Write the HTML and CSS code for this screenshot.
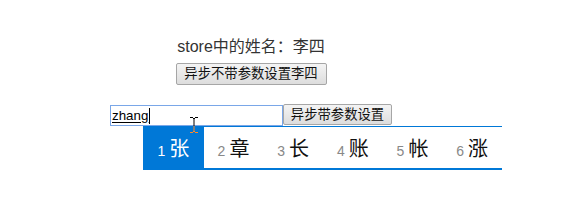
FILE: index.html
```html
<!DOCTYPE html>
<html>
<head>
<meta charset="utf-8">
<link rel="stylesheet" href="styles.css">
</head>
<body>
<div class="app">
  <div class="name">store中的姓名：李四</div>
  <div class="row1"><button class="btn">异步不带参数设置李四</button></div>
  <div class="row2">
    <div class="input"><span class="comp">zhang</span><span class="caret"></span></div><button class="btn">异步带参数设置</button>
  </div>
</div>
<div class="ime">
  <div class="cand sel"><span class="num">1</span><span class="ch">张</span></div>
  <div class="cand"><span class="num">2</span><span class="ch">章</span></div>
  <div class="cand"><span class="num">3</span><span class="ch">长</span></div>
  <div class="cand"><span class="num">4</span><span class="ch">账</span></div>
  <div class="cand"><span class="num">5</span><span class="ch">帐</span></div>
  <div class="cand"><span class="num">6</span><span class="ch">涨</span></div>
</div>
<svg class="cursor" width="9" height="16" viewBox="0 0 9 16">
  <rect x="0" y="0" width="3" height="1" fill="#000"/>
  <rect x="5" y="0" width="3" height="1" fill="#000"/>
  <rect x="3" y="1" width="2" height="1" fill="#000"/>
  <rect x="3.5" y="1" width="1" height="8" fill="#000"/>
  <rect x="3.5" y="9" width="1" height="5" fill="#ff8828"/>
  <rect x="3" y="14" width="2" height="1" fill="#ff8828"/>
  <rect x="0" y="15" width="3" height="1" fill="#ff8828"/>
  <rect x="5" y="15" width="3" height="1" fill="#ff8828"/>
</svg>
</body>
</html>
```
FILE: styles.css
```css
html, body {
  margin: 0;
  padding: 0;
  background: #fff;
}
.app {
  width: 502px;
  padding-top: 37px;
  text-align: center;
  font-family: "Liberation Sans", "Noto Sans CJK SC", sans-serif;
  color: #333;
}
.name {
  font-size: 16px;
  line-height: 20px;
  height: 20px;
  color: #333;
}
.row1 {
  margin-top: 6px;
  height: 22px;
}
.row2 {
  margin-top: 19px;
  display: flex;
  justify-content: center;
  align-items: center;
  height: 22px;
}
.btn {
  box-sizing: border-box;
  height: 22px;
  margin: 0;
  padding: 0 6px;
  font-family: "Liberation Sans", "Noto Sans CJK SC", sans-serif;
  font-size: 13.333px;
  line-height: 18px;
  color: #111;
  background: linear-gradient(#f4f4f4, #dddddd);
  border: 1px solid #a6a6a6;
  border-radius: 2px;
}
.row2 .btn {
  width: 109px;
  height: 21px;
  margin-top: -1px;
}
.row1 .btn {
  width: 151px;
}
.input {
  box-sizing: border-box;
  width: 173px;
  height: 21px;
  margin-top: 1px;
  border: 1px solid #7aa7e8;
  display: flex;
  align-items: center;
  padding-left: 1px;
  font-family: "Liberation Sans", sans-serif;
  font-size: 13.333px;
  color: #000;
  text-align: left;
}
.comp {
  text-decoration: underline;
  text-underline-offset: 2px;
  line-height: 16px;
}
.caret {
  display: inline-block;
  width: 1px;
  height: 16px;
  background: #000;
  margin-left: 1px;
}
.ime {
  position: absolute;
  left: 143px;
  top: 126px;
  width: 359px;
  height: 41px;
  border-top: 1px solid #0078d7;
  border-bottom: 2px solid #0078d7;
  display: flex;
  background: #fff;
  font-family: "Noto Sans CJK SC", sans-serif;
}
.cand {
  width: 60px;
  height: 41px;
  display: flex;
  align-items: baseline;
  justify-content: center;
  gap: 4px;
  padding-top: 9px;
  box-sizing: border-box;
}
.cand.sel {
  width: 61px;
  background: #0078d7;
}
.num {
  font-family: "Liberation Sans", sans-serif;
  font-size: 14px;
  color: #888;
}
.ch {
  font-size: 20px;
  color: #111;
  line-height: 24px;
}
.sel .num, .sel .ch {
  color: #fff;
}
.cursor {
  position: absolute;
  left: 190px;
  top: 117px;
}
```
